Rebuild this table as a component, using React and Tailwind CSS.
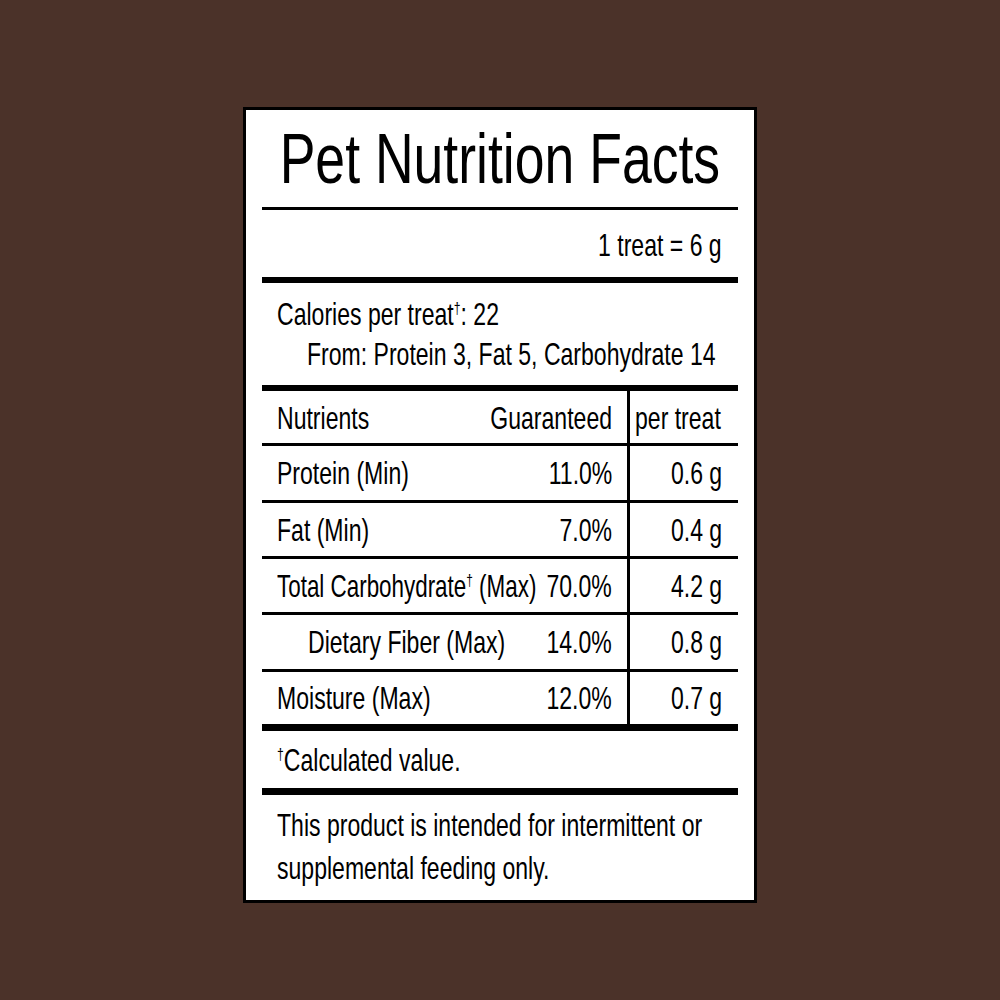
// condensed look: Liberation Sans squeezed horizontally, since no condensed face is installed
const T = ({ children, o = 'origin-left', s = 'scale-x-[0.72]' }) => (
  <span className={`inline-block whitespace-nowrap ${s} ${o}`}>{children}</span>
);

const Dag = () => <span className="text-[17px] leading-none align-[11px]">†</span>;

const rows = [
  { name: 'Protein (Min)', pct: '11.0%', amt: '0.6 g', h: 'h-[57px] border-b-[3px]' },
  { name: 'Fat (Min)', pct: '7.0%', amt: '0.4 g', h: 'h-[56px] border-b-[3px]' },
  { name: <>Total Carbohydrate<Dag /> (Max)</>, pct: '70.0%', amt: '4.2 g', h: 'h-[56px] border-b-[3px]', tight: true },
  { name: 'Dietary Fiber (Max)', pct: '14.0%', amt: '0.8 g', h: 'h-[57px] border-b-[3px]', indent: true },
  { name: 'Moisture (Max)', pct: '12.0%', amt: '0.7 g', h: 'h-[59px] border-b-[7px]' },
];

const App = () => {
  return (
    <div className="w-full h-[1000px] bg-[#4b3229] flex justify-center pt-[107px] font-['Liberation_Sans',Arial,sans-serif] text-black">
      <div className="w-[514px] h-[796px] border-[3px] border-black bg-white px-[16px] flex flex-col">
        <div className="h-[100px] shrink-0 border-b-[3px] border-black flex items-center justify-center text-[70px] leading-none">
          <span className="inline-block whitespace-nowrap scale-x-[0.765] origin-center">Pet Nutrition Facts</span>
        </div>
        <div className="h-[73px] shrink-0 border-b-[6px] border-black flex items-center justify-end pr-[16px] pt-[3px] text-[32px] leading-none">
          <T o="origin-right">1 treat = 6 g</T>
        </div>
        <div className="h-[108px] shrink-0 border-b-[6px] border-black pl-[15px] pt-[11px] text-[32px] leading-[40px]">
          <div><T>Calories per treat<Dag />: 22</T></div>
          <div className="pl-[30px]"><T>From: Protein 3, Fat 5, Carbohydrate 14</T></div>
        </div>
        <div className="flex shrink-0 border-b-[3px] border-black h-[55px] text-[32px] leading-none">
          <div className="w-[365px] flex items-center justify-between pl-[15px] pr-[15px] pt-[2px]">
            <T>Nutrients</T>
            <T o="origin-right">Guaranteed</T>
          </div>
          <div className="flex-1 min-w-0 border-l-[3px] border-black flex items-center pl-[5px] pt-[2px]">
            <T>per treat</T>
          </div>
        </div>
        {rows.map((r, i) => (
          <div key={i} className={`flex shrink-0 border-black text-[32px] leading-none ${r.h}`}>
            <div className={`w-[365px] flex items-center pr-[15px] ${r.indent ? 'pl-[46px]' : 'pl-[15px]'}`}>
              <div className="flex-1 min-w-0">
                <T s={r.tight ? 'scale-x-[0.7]' : 'scale-x-[0.72]'}>{r.name}</T>
              </div>
              <div className="shrink-0 flex justify-end">
                <T o="origin-right">{r.pct}</T>
              </div>
            </div>
            <div className="flex-1 min-w-0 border-l-[3px] border-black flex items-center justify-end pr-[16px]">
              <T o="origin-right">{r.amt}</T>
            </div>
          </div>
        ))}
        <div className="h-[64px] shrink-0 border-b-[7px] border-black flex items-center pl-[15px] text-[32px] leading-none">
          <T><Dag />Calculated value.</T>
        </div>
        <div className="pl-[15px] pt-[9px] text-[32px] leading-[43px]">
          <div><T>This product is intended for intermittent or</T></div>
          <div><T>supplemental feeding only.</T></div>
        </div>
      </div>
    </div>
  );
};

export default App;
